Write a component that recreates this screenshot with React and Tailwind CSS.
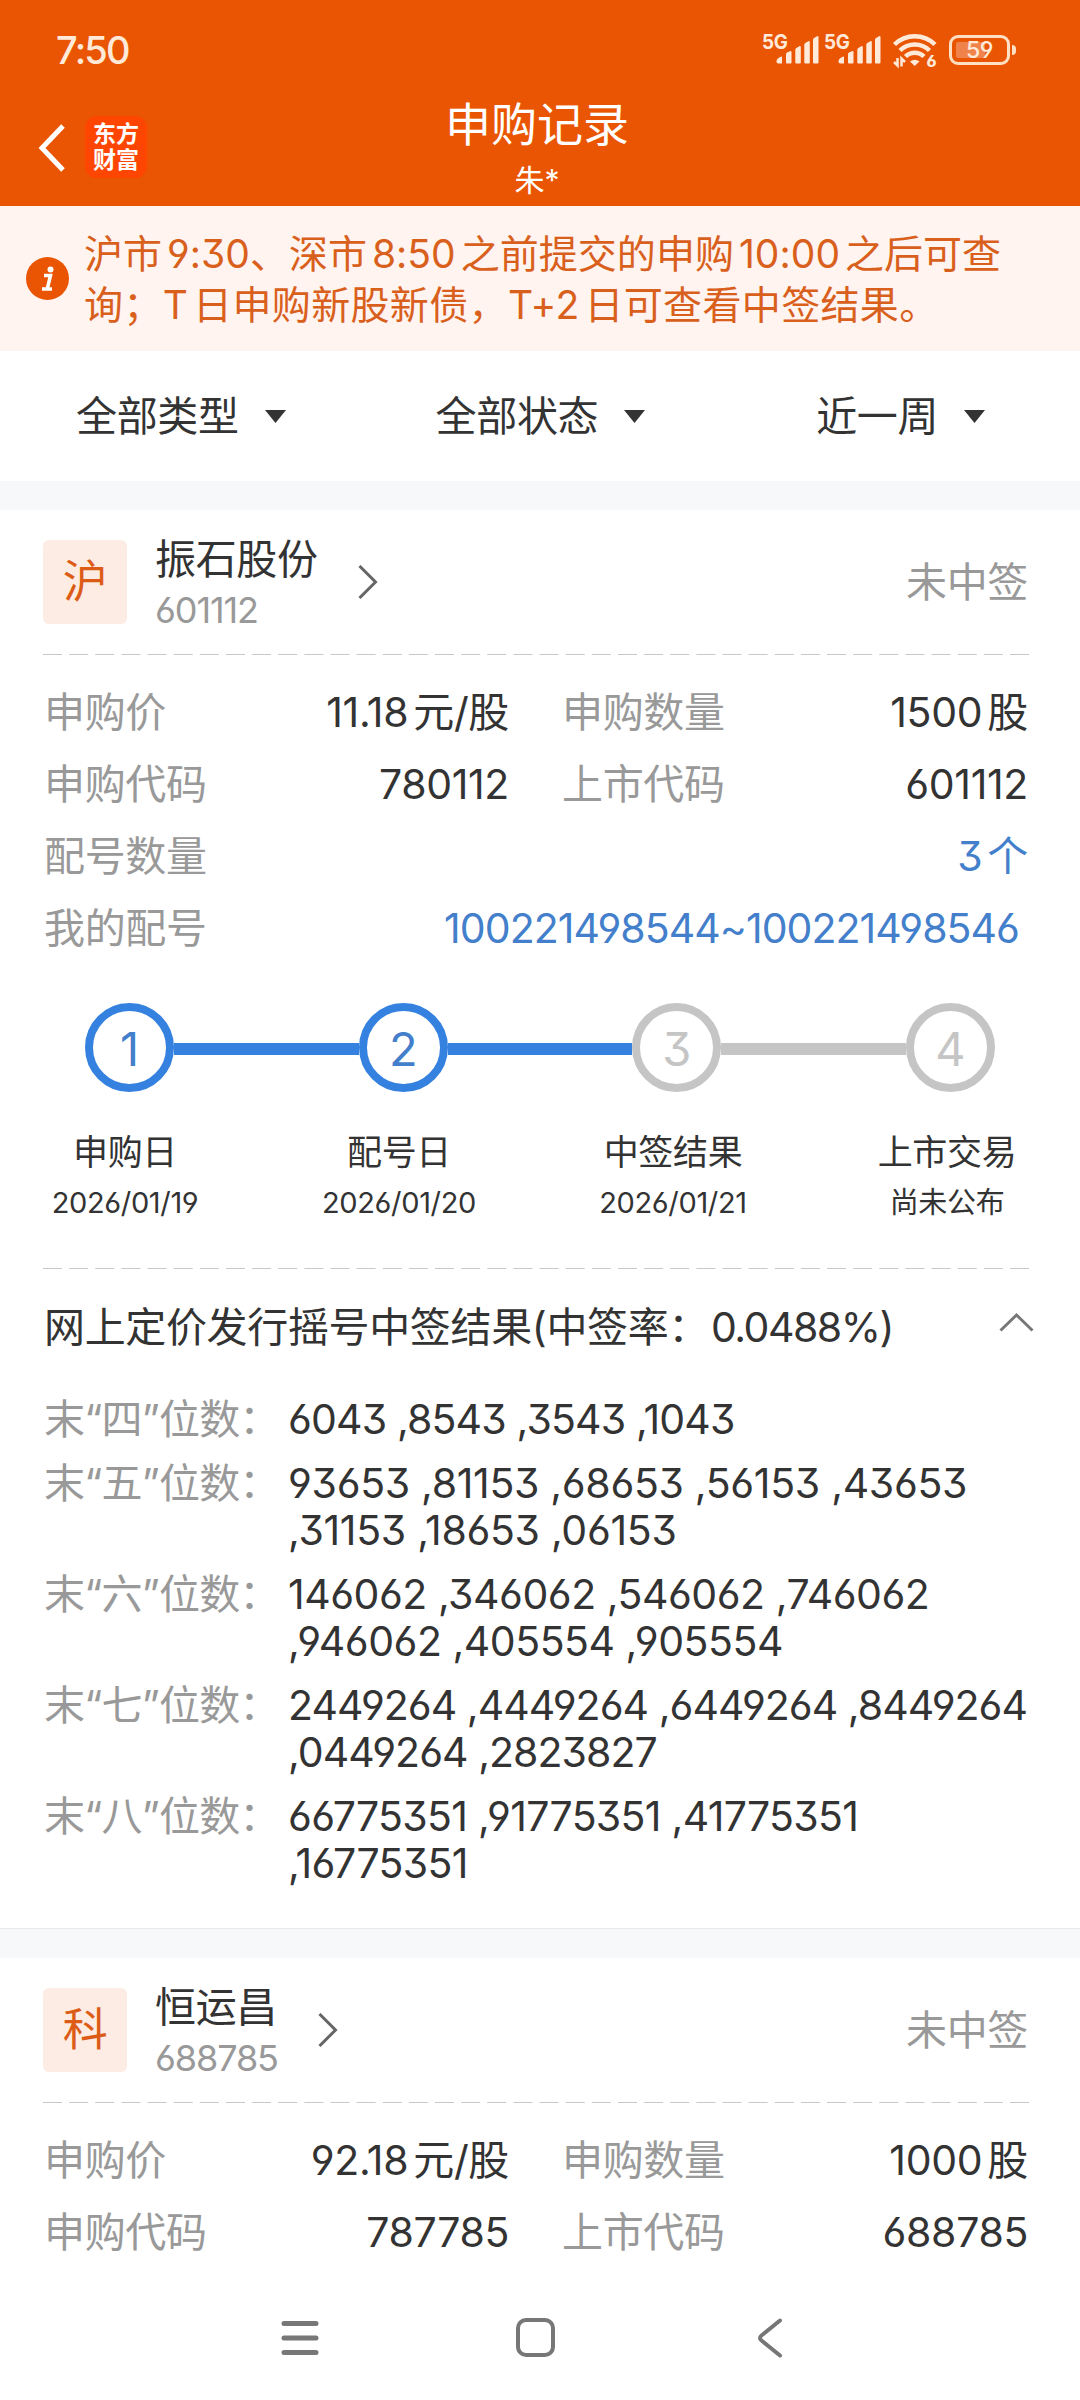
import { Fragment } from "react";
import clsx from "clsx";

const records = [
  {
    badge: "沪",
    name: "振石股份",
    code: "601112",
    status: "未中签",
    price: "11.18元/股",
    amount: "1500股",
    applyCode: "780112",
    listCode: "601112",
    allotCount: "3个",
    allotRange: "100221498544~100221498546",
    steps: [
      { label: "申购日", date: "2026/01/19", done: true },
      { label: "配号日", date: "2026/01/20", done: true },
      { label: "中签结果", date: "2026/01/21", done: false },
      { label: "上市交易", date: "尚未公布", done: false },
    ],
    rate: "0.0488%",
    results: [
      {
        digit: "四",
        tracking: "tracking-[-0.84px]",
        lines: ["6043 ,8543 ,3543 ,1043"],
      },
      {
        digit: "五",
        tracking: "tracking-[-0.32px]",
        lines: ["93653 ,81153 ,68653 ,56153 ,43653", ",31153 ,18653 ,06153"],
      },
      {
        digit: "六",
        tracking: "tracking-[-0.48px]",
        lines: ["146062 ,346062 ,546062 ,746062", ",946062 ,405554 ,905554"],
      },
      {
        digit: "七",
        tracking: "tracking-[-0.95px]",
        lines: ["2449264 ,4449264 ,6449264 ,8449264", ",0449264 ,2823827"],
      },
      {
        digit: "八",
        tracking: "tracking-[-0.7px]",
        lines: ["66775351 ,91775351 ,41775351", ",16775351"],
      },
    ],
  },
  {
    badge: "科",
    name: "恒运昌",
    code: "688785",
    status: "未中签",
    price: "92.18元/股",
    amount: "1000股",
    applyCode: "787785",
    listCode: "688785",
  },
];

function Signal() {
  return (
    <svg className="h-9 w-[58px] overflow-visible" viewBox="0 0 58 36" fill="#ffe9d8">
      <text
        x="0"
        y="16.500"
        fontSize="20.500"
        fontWeight="700"
        textLength="25.500"
        lengthAdjust="spacingAndGlyphs"
      >
        5G
      </text>
      <path d="M14.500 29.500c0-2.500 2.500-4.500 5.500-5v7h-3.500c-1.500 0-2-.8-2-2z" />
      <path d="M24 22q0-1 1-1.500l3.500-1.500q1 0 1 1v10.500q0 1-1 1h-3.500q-1 0-1-1z" />
      <path d="M33.300 17.500q0-1 1-1.500l3.500-2q1 0 1 1v15.500q0 1-1 1h-3.500q-1 0-1-1z" />
      <path d="M42.300 12.500q0-1 1-1.500l3.500-2q1 0 1 1v20.500q0 1-1 1h-3.500q-1 0-1-1z" />
      <path d="M51 7.500q0-1 1-1.500l3.500-2q1 0 1 1v25.500q0 1-1 1h-3.500q-1 0-1-1z" />
    </svg>
  );
}

function Wifi() {
  return (
    <svg
      className="h-9 w-[44px] overflow-visible"
      viewBox="0 0 44 36"
      fill="none"
      stroke="#ffe9d8"
    >
      <path d="M1.500 12.500a29 29 0 0 1 40.500 0" strokeWidth="4.500" />
      <path d="M7 18.500a21 21 0 0 1 29.500 0" strokeWidth="4.500" />
      <path d="M12.500 24.500a13 13 0 0 1 18.500 0" strokeWidth="4.500" />
      <path d="M17 29.500q4.700-3.500 9.500 0L21.700 34z" fill="#ffe9d8" stroke="none" />
      <path d="M4.500 26v7.500L1 30M8.500 34.500V26.500L12 30" strokeWidth="2.500" />
      <text
        x="33.500"
        y="34.500"
        fontSize="16"
        fontWeight="800"
        fill="#ffe9d8"
        stroke="none"
      >
        6
      </text>
    </svg>
  );
}

function StatusBar() {
  return (
    <div className="flex h-[100px] items-center text-[#ffe9d8]">
      <span className="ml-14 text-[38px] leading-none font-medium tracking-[-1.8px]">
        7:50
      </span>
      <div className="mr-[64px] ml-auto flex items-center">
        <Signal />
        <div className="w-1" />
        <Signal />
        <div className="w-[11px]" />
        <Wifi />
        <div className="ml-[12px] flex h-[30px] w-[61px] items-center justify-center rounded-[9px] border-[3px] border-[#ffe0c4] bg-linear-to-r from-[#f0834b] from-60% to-[#e95502] to-60% bg-clip-content p-1">
          <span className="text-[23px] leading-none font-medium">59</span>
        </div>
        <div className="ml-0.5 h-[10px] w-[4px] rounded-r-sm bg-[#ffe0c4]" />
      </div>
    </div>
  );
}

function Header() {
  return (
    <header className="h-[206px] bg-[#e95502] text-white">
      <StatusBar />
      <div className="grid h-[106px] grid-cols-[1fr_auto_1fr] pr-[6px]">
        <div className="flex items-start pt-4 pl-[38px]">
          <svg
            className="mt-2 h-[48px] w-[28px]"
            viewBox="0 0 28 48"
            fill="none"
            stroke="white"
            strokeWidth="5"
          >
            <path d="M25 2L4 24l21 22" />
          </svg>
          <div className="ml-[19px] flex h-[62px] w-[62px] flex-col items-center justify-center rounded-xl bg-[#ff4502] text-[23px] leading-[26px] font-bold tracking-normal">
            <span>东方</span>
            <span>财富</span>
          </div>
        </div>
        <div className="flex flex-col items-center tracking-normal">
          <h1 className="text-[46px] leading-[48px]">申购记录</h1>
          <p className="mt-[15px] text-[30px] leading-[34px]">朱*</p>
        </div>
      </div>
    </header>
  );
}

function Notice() {
  return (
    <div className="flex h-[145px] items-center bg-[#fff4ef] pl-[26px] text-[#d9601c]">
      <svg className="h-[43px] w-[43px]" viewBox="0 0 43 43">
        <circle cx="21.500" cy="21.500" r="21.500" fill="#e95502" />
        <circle cx="24.500" cy="12.500" r="3" fill="white" />
        <path
          d="M18 18.500h6.500l-3 12.500M16 32h10"
          fill="none"
          stroke="white"
          strokeWidth="3.500"
        />
      </svg>
      <div className="ml-[15px] text-[39px] leading-[51px] whitespace-nowrap">
        <p className="tracking-[0.05px]">
          沪市9:30、深市8:50之前提交的申购10:00之后可查
        </p>
        <p className="tracking-[0.35px]">询；T日申购新股新债，T+2日可查看中签结果。</p>
      </div>
    </div>
  );
}

function Filter({ label }) {
  return (
    <button className="flex items-center text-[41px] leading-none">
      {label}
      <svg className="ml-[26px] h-[13px] w-[21px]" viewBox="0 0 21 13" fill="#333">
        <path d="M0 0h21L10.500 13z" />
      </svg>
    </button>
  );
}

function Divider() {
  return (
    <svg className="block h-0.5 w-[986px]" viewBox="0 0 986 2">
      <path d="M0 .5h986" stroke="#c8c8c8" strokeDasharray="19 7.135" />
    </svg>
  );
}

function Field({ label, value }) {
  return (
    <div className="flex justify-between">
      <span className="text-[#999]">{label}</span>
      <span>{value}</span>
    </div>
  );
}

function Steps({ steps }) {
  return (
    <div className="pt-[39px]">
      <div className="flex items-center pl-[42px]">
        {steps.map((step, i) => (
          <Fragment key={step.label}>
            {i > 0 && (
              <div
                className={clsx(
                  "mt-[3px] h-3 w-[184.6px]",
                  steps[i - 1].done ? "bg-[#3581e0]" : "bg-[#c5c5c5]"
                )}
              />
            )}
            <div
              className={clsx(
                "flex h-[89px] w-[89px] items-center justify-center rounded-full border-8 pt-[3px] text-[47px]",
                step.done
                  ? "border-[#3581e0] text-[#437fcb]"
                  : "border-[#c5c5c5] text-[#c5c5c5]"
              )}
            >
              {i + 1}
            </div>
          </Fragment>
        ))}
      </div>
      <div className="-ml-[55px] flex pt-[38px] text-center">
        {steps.map((step) => (
          <div key={step.label} className="w-[274px] shrink-0">
            <p className="text-[35px] leading-[44px]">{step.label}</p>
            <p className="mt-[9px] text-[29px] leading-[40px]">{step.date}</p>
          </div>
        ))}
      </div>
    </div>
  );
}

function Results({ rate, results }) {
  return (
    <>
      <div className="mt-[30px] flex h-[56px] items-center">
        <span className="pl-px">
          网上定价发行摇号中签结果(中签率：
          <span className="ml-0.5 tracking-[-1.5px]">{rate})</span>
        </span>
        <svg
          className="mr-[-6px] mb-3 ml-auto h-[20px] w-[35px]"
          viewBox="0 0 35 20"
          fill="none"
          stroke="#777"
          strokeWidth="3"
        >
          <path d="M1.500 18.500l16-15.500 16 15.500" />
        </svg>
      </div>
      <div className="mt-[40px] flex flex-col gap-[17px] leading-[47px]">
        {results.map(({ digit, tracking, lines }) => (
          <div key={digit} className="flex pl-px">
            <span className="w-[244px] shrink-0 tracking-[-0.8px] text-[#999]">
              末“{digit}”位数：
            </span>
            <div className={tracking}>
              {lines.map((line) => (
                <p key={line}>{line}</p>
              ))}
            </div>
          </div>
        ))}
      </div>
    </>
  );
}

function Record({ record }) {
  return (
    <section className="pr-[52px] pl-[43px] text-[41px] whitespace-nowrap">
      <div className="flex h-[144px] items-center">
        <div className="flex h-[84px] w-[84px] items-center justify-center rounded-md bg-[#fcece3] text-[45px] text-[#dc5c17]">
          {record.badge}
        </div>
        <div className="ml-[28px] pt-1">
          <p className="leading-[52px]">{record.name}</p>
          <p className="text-[36px] leading-[50px] tracking-[-1.1px] text-[#999]">
            {record.code}
          </p>
        </div>
        <svg
          className="ml-[40px] h-[34px] w-[20px]"
          viewBox="0 0 20 34"
          fill="none"
          stroke="#666"
          strokeWidth="3"
        >
          <path d="M1.500 1l16 16-16 16" />
        </svg>
        <span className="ml-auto pt-px text-[#999]">{record.status}</span>
      </div>
      <Divider />
      <div className="grid grid-cols-[465px_466px] gap-x-[53px] pt-[20px] pl-px leading-[72px]">
        <Field label="申购价" value={record.price} />
        <Field label="申购数量" value={record.amount} />
        <Field label="申购代码" value={record.applyCode} />
        <Field label="上市代码" value={record.listCode} />
      </div>
      {record.steps && (
        <>
          <div className="pl-px leading-[72px]">
            <div className="flex justify-between">
              <span className="text-[#999]">配号数量</span>
              <span className="text-[#437fcb]">{record.allotCount}</span>
            </div>
            <div className="flex justify-between pr-[9px]">
              <span className="text-[#999]">我的配号</span>
              <span className="tracking-[-0.95px] text-[#437fcb]">
                {record.allotRange}
              </span>
            </div>
          </div>
          <Steps steps={record.steps} />
          <div className="pt-[45px]">
            <Divider />
          </div>
          <Results rate={record.rate} results={record.results} />
        </>
      )}
    </section>
  );
}

function NavBar() {
  return (
    <nav className="flex h-[125px] items-center bg-white pl-[281px] text-[#777]">
      <svg
        className="h-10 w-[38px]"
        viewBox="0 0 38 40"
        stroke="currentColor"
        strokeWidth="5"
        strokeLinecap="round"
      >
        <path d="M3 5.500h32M3 20h32M3 34.500h32" />
      </svg>
      <div className="ml-[197px] h-[39px] w-[39px] rounded-[10px] border-4 border-current" />
      <svg
        className="ml-[202px] h-10 w-[26px]"
        viewBox="0 0 26 40"
        fill="none"
        stroke="currentColor"
        strokeWidth="4"
        strokeLinecap="round"
      >
        <path d="M23 2.500L4.500 17.500q-3 2.500 0 5L23 37.500" />
      </svg>
    </nav>
  );
}

export default function App() {
  return (
    <div className="flex h-[2400px] w-[1080px] flex-col overflow-hidden bg-white font-['Inter','Noto_Sans_CJK_SC',sans-serif] tracking-[-0.35px] text-[#333] [font-feature-settings:'cv03','cv04','cv09'] [text-autospace:normal]">
      <Header />
      <Notice />
      <div className="flex h-[130px] items-center pl-[76px]">
        <Filter label="全部类型" />
        <div className="w-[150px]" />
        <Filter label="全部状态" />
        <div className="w-[171px]" />
        <Filter label="近一周" />
      </div>
      <div className="h-[29px] bg-[#f7f8fa]" />
      <div className="h-[1418px]">
        <Record record={records[0]} />
      </div>
      <div className="h-[30px] border-t border-[#e9ebee] bg-[#f7f8fa]" />
      <div className="flex-1">
        <Record record={records[1]} />
      </div>
      <NavBar />
    </div>
  );
}
